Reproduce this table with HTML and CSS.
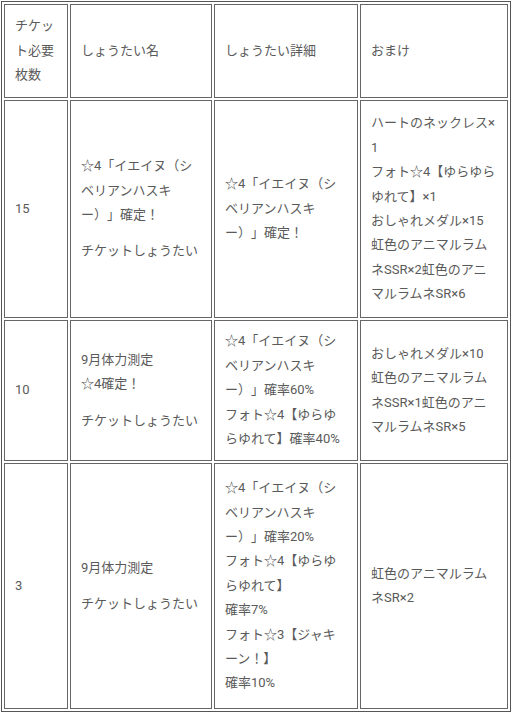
FILE: index.html
```html
<!DOCTYPE html>
<html lang="ja">
<head>
<meta charset="utf-8">
<link rel="stylesheet" href="styles.css">
</head>
<body>
<table class="ticket-table">
  <colgroup>
    <col class="c1"><col class="c2"><col class="c3"><col class="c4">
  </colgroup>
  <tr class="r-head">
    <td>チケット必要枚数</td>
    <td>しょうたい名</td>
    <td>しょうたい詳細</td>
    <td>おまけ</td>
  </tr>
  <tr class="r-1">
    <td>15</td>
    <td><p>☆4「イエイヌ（シベリアンハスキー）」確定！</p><p>チケットしょうたい</p></td>
    <td>☆4「イエイヌ（シベリアンハスキー）」確定！</td>
    <td>ハートのネックレス×<wbr>1<br>フォト☆4【ゆらゆらゆれて】×1<br>おしゃれメダル×15<br>虹色のアニマルラムネSSR×2虹色のアニマルラムネSR×6</td>
  </tr>
  <tr class="r-2">
    <td>10</td>
    <td><p>9月体力測定<br>☆4確定！</p><p>チケットしょうたい</p></td>
    <td>☆4「イエイヌ（シベリアンハスキー）」確率60%<br>フォト☆4【ゆらゆらゆれて】確率40%</td>
    <td>おしゃれメダル×10<br>虹色のアニマルラムネSSR×1虹色のアニマルラムネSR×5</td>
  </tr>
  <tr class="r-3">
    <td>3</td>
    <td><p>9月体力測定</p><p>チケットしょうたい</p></td>
    <td>☆4「イエイヌ（シベリアンハスキー）」確率20%<br>フォト☆4【ゆらゆらゆれて】<br>確率7%<br>フォト☆3【ジャキーン！】<br>確率10%</td>
    <td>虹色のアニマルラムネSR×2</td>
  </tr>
</table>
</body>
</html>
```

FILE: styles.css
```css
html, body {
  margin: 0;
  padding: 0;
  background: #ffffff;
}

.ticket-table {
  margin: 1px 0 0 1px;
  width: 510px;
  table-layout: fixed;
  border: 1px solid #555555;
  border-spacing: 2px;
  font-family: "Roboto", "Noto Sans CJK JP", sans-serif;
  font-size: 13px;
  line-height: 24.4px;
  color: #5a5a5a;
  text-spacing-trim: space-all;
}

.c1 { width: 64px; }
.c2 { width: 142px; }
.c3 { width: 144px; }
.c4 { width: 148px; }

.ticket-table td {
  border: 1px solid #666666;
  padding: 8px 10px;
  vertical-align: middle;
  text-align: left;
  word-break: normal;
}

.ticket-table p {
  margin: 0;
}

.ticket-table p + p {
  margin-top: 12px;
}

.r-head { height: 94px; }
.r-1 { height: 218px; }
.r-2 { height: 141px; }
.r-3 { height: 246px; }
```
